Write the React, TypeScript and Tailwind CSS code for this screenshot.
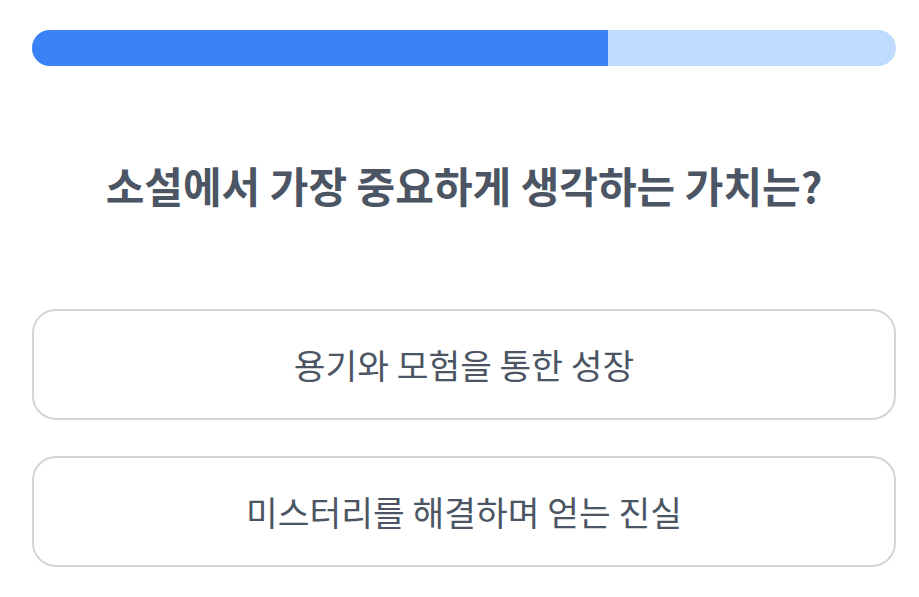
const options = ['용기와 모험을 통한 성장', '미스터리를 해결하며 얻는 진실'];

export default function App() {
  const progress = 2 / 3;

  return (
    <div
      className="min-h-screen bg-white pl-8 pr-[23px] pt-[30px]"
      style={{ fontFamily: '"Noto Sans CJK KR", "Noto Sans", sans-serif' }}
    >
      {/* Progress */}
      <div className="h-9 w-full overflow-hidden rounded-full bg-[#bfdbfe]">
        <div className="h-full bg-[#3b82f6]" style={{ width: `${progress * 100}%` }} />
      </div>

      {/* Question */}
      <h1 className="mt-[91px] text-center text-[42px] font-bold leading-[56px] text-[#4b5563]">
        소설에서 가장 중요하게 생각하는 가치는?
      </h1>

      {/* Answers */}
      <div className="mt-[96px] flex flex-col gap-[36px]">
        {options.map((opt) => (
          <button
            key={opt}
            className="flex h-[111px] w-full items-center justify-center rounded-3xl border-2 border-[#d1d5db] bg-white text-[34.5px] text-[#4b5563]"
          >
            {opt}
          </button>
        ))}
      </div>
    </div>
  );
}
